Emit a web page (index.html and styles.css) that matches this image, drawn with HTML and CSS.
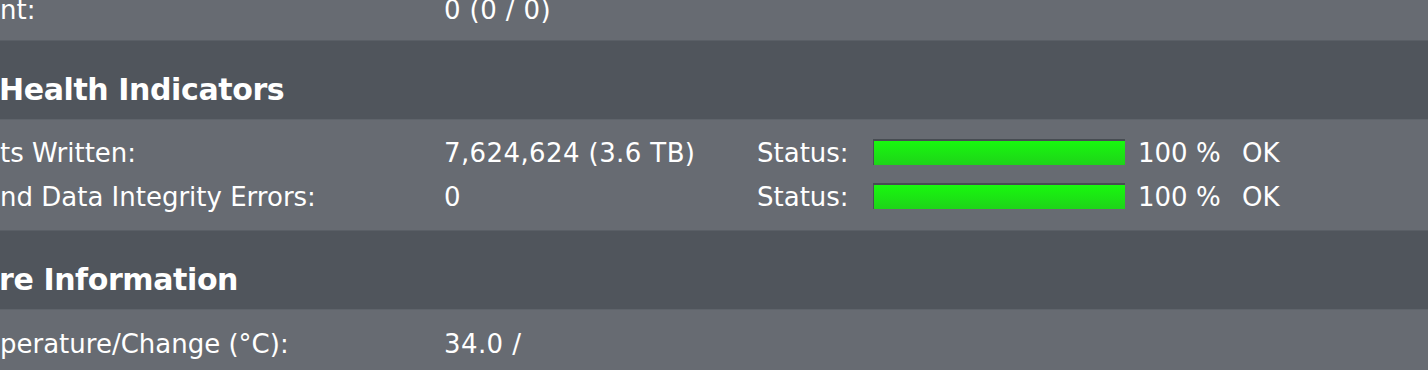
FILE: index.html
```html
<!DOCTYPE html>
<html>
<head>
<meta charset="utf-8">
<link rel="stylesheet" href="styles.css">
</head>
<body>
<div class="panel">
  <div class="group first">
    <div class="row">
      <div class="label">nt:</div>
      <div class="value">0 (0 / 0)</div>
    </div>
  </div>
  <div class="header"><span class="htext">Health Indicators</span></div>
  <div class="group mid">
    <div class="row">
      <div class="label">ts Written:</div>
      <div class="value">7,624,624 (3.6 TB)</div>
      <div class="status">
        <span class="slabel">Status:</span>
        <div class="bar"><div class="fill" style="width:100%"></div></div>
        <span class="pct">100 %</span>
        <span class="ok">OK</span>
      </div>
    </div>
    <div class="row">
      <div class="label">nd Data Integrity Errors:</div>
      <div class="value">0</div>
      <div class="status">
        <span class="slabel">Status:</span>
        <div class="bar"><div class="fill" style="width:100%"></div></div>
        <span class="pct">100 %</span>
        <span class="ok">OK</span>
      </div>
    </div>
  </div>
  <div class="header second"><span class="htext">re Information</span></div>
  <div class="group last">
    <div class="row">
      <div class="label">perature/Change (°C):</div>
      <div class="value">34.0 /</div>
    </div>
  </div>
</div>
</body>
</html>
```
FILE: styles.css
```css
html, body {
  margin: 0;
  padding: 0;
  background: #676b72;
  overflow: hidden;
}
.panel {
  width: 1428px;
  height: 370px;
  display: flex;
  flex-direction: column;
  font-family: "DejaVu Sans", "Lucida Grande", sans-serif;
  font-size: 26px;
  color: #ffffff;
  overflow: hidden;
}
.group {
  background: #676b72;
  display: flex;
  flex-direction: column;
  flex: none;
  box-sizing: border-box;
}
.group.first {
  height: 41px;
  padding-bottom: 8px;
  justify-content: flex-end;
  overflow: hidden;
  border-bottom: 1px solid #5a5f66;
}
.group.mid {
  height: 112px;
  padding-top: 11px;
  padding-bottom: 13px;
  border-top: 1px solid #5f646b;
  border-bottom: 1px solid #5a5f66;
}
.group.last {
  flex: 1;
  padding-top: 12px;
  border-top: 1px solid #5f646b;
}
.header {
  background: #50555c;
  height: 78px;
  flex: none;
  box-sizing: border-box;
  padding-top: 31px;
}
.header.second {
  padding-top: 31px;
}
.htext {
  display: block;
  font-weight: bold;
  font-size: 30px;
  letter-spacing: -0.4px;
  line-height: 35px;
  margin-left: -1px;
}
.row {
  display: flex;
  align-items: center;
  height: 44px;
  flex: none;
}
.label {
  width: 444px;
  flex: none;
  white-space: nowrap;
}
.value {
  width: 313px;
  flex: none;
  white-space: nowrap;
  letter-spacing: 0.4px;
}
.status {
  display: flex;
  align-items: center;
}
.slabel {
  width: 116px;
}
.bar {
  width: 252px;
  height: 26px;
  background: #3f444a;
  border-top: 2px solid #474c52;
  border-left: 1px solid #4a4f55;
  box-sizing: border-box;
  margin-top: -2px;
}
.fill {
  height: 100%;
  background: linear-gradient(#18f80e, #1ed419);
}
.pct {
  margin-left: 13px;
  width: 104px;
}
```
